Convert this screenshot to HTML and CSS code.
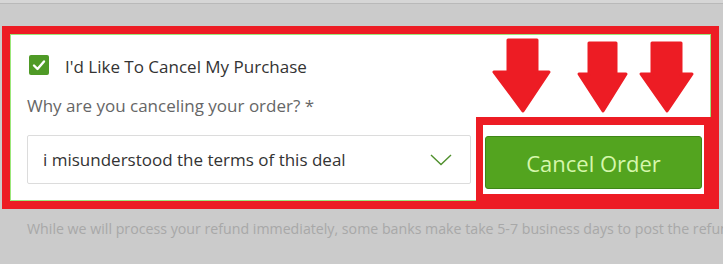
FILE: index.html
```html
<!DOCTYPE html>
<html>
<head>
	<title>Cancel Order</title>
	<link rel="stylesheet" href="styles.css">
</head>
<body>
	<div class="topbar"></div>
	<!-- cancel form -->
	<div class="panel">
		<div class="card">
			<label class="check-row">
				<span class="checkbox">
					<svg width="20" height="20" viewBox="0 0 20 20"><path d="M5 10.5 L8.5 14 L15 6.5" fill="none" stroke="#fff" stroke-width="2.4" stroke-linecap="round" stroke-linejoin="round"/></svg>
				</span>
				<span class="check-label">I'd Like To Cancel My Purchase</span>
			</label>
			<div class="question">Why are you canceling your order? *</div>
			<div class="form-row">
				<div class="select">
					<span class="select-text">i misunderstood the terms of this deal</span>
					<svg class="chevron" width="22" height="12" viewBox="0 0 22 12"><path d="M1 1 L11 10.5 L21 1" fill="none" stroke="#4f8f2c" stroke-width="1.4"/></svg>
				</div>
				<div class="btn-box">
					<a class="btn">Cancel Order</a>
				</div>
			</div>
		</div>
	</div>
	<p class="note">While we will process your refund immediately, some banks make take 5-7 business days to post the refund</p>

	<!-- annotation arrows -->
	<svg class="arrows" width="723" height="264" viewBox="0 0 723 264">
		<g fill="#ed1c24" stroke="#ed1c24" stroke-width="3" stroke-linejoin="round">
			<path d="M508 40 L537 40 L537 72 L549 72 L523 111 L494 72 L508 72 Z"/>
			<path d="M589 43 L616 43 L616 74 L626 74 L603 111 L579 74 L589 74 Z"/>
			<path d="M652 43 L681 43 L681 74 L692 74 L667 111 L641 74 L652 74 Z"/>
		</g>
	</svg>
</body>
</html>
```

FILE: styles.css
```css
*{
	margin: 0;
	padding: 0;
	box-sizing: border-box;
}
body{
	width: 723px;
	height: 264px;
	overflow: hidden;
	position: relative;
	background: #cbcbcb;
	font-family: "Open Sans", "Liberation Sans", sans-serif;
}
.topbar{
	height: 4px;
	background: #d6d6d6;
	border-bottom: 1px solid #b9b9b9;
}
.panel{
	margin: 22px 0 0 2px;
	width: 717px;
	border: 8px solid #ed1c24;
	background: #fff;
}
.card{
	border: 1px solid #9be77a;
	padding: 20px 0 0 16px;
}
.check-row{
	display: flex;
	align-items: flex-start;
	margin-left: 2px;
}
.checkbox{
	width: 20px;
	height: 20px;
	border-radius: 2px;
	background: #4f9a26;
	display: flex;
}
.check-label{
	margin-left: 16px;
	margin-top: 1px;
	font-size: 17px;
	color: #333;
	line-height: 22px;
}
.question{
	margin-top: 16px;
	font-size: 17px;
	line-height: 24px;
	color: #666;
}
.form-row{
	display: flex;
	align-items: flex-start;
}
.select{
	margin-top: 17px;
	width: 444px;
	height: 49px;
	border: 1px solid #dcdcdc;
	border-radius: 2px;
	display: flex;
	align-items: center;
	justify-content: space-between;
	padding: 0 18px 0 15px;
}
.select-text{
	font-size: 17px;
	color: #333;
}
.btn-box{
	position: relative;
	margin: -1px -1px -1px 5px;
	width: 235px;
	height: 84px;
	border-style: solid;
	border-color: #ed1c24;
	border-width: 8px 7px 7px 7px;
	background: #fff;
	padding: 11px 2px 0 2px;
}
.btn{
	display: flex;
	align-items: center;
	justify-content: center;
	height: 53px;
	border: 1px solid #3f8716;
	border-radius: 3px;
	background: #53a41f;
	color: #d6f7ac;
	font-size: 22px;
}
.note{
	margin: 10px 0 0 27px;
	white-space: nowrap;
	font-size: 14.2px;
	line-height: 20px;
	color: #a8a8a8;
}
.arrows{
	position: absolute;
	left: 0;
	top: 0;
	pointer-events: none;
}
```
